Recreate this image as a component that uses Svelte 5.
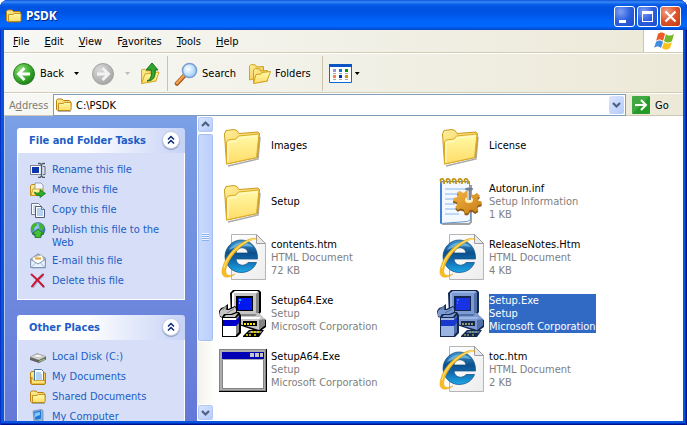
<script>
  const menus = [
    { before: '', key: 'F', after: 'ile' },
    { before: '', key: 'E', after: 'dit' },
    { before: '', key: 'V', after: 'iew' },
    { before: 'F', key: 'a', after: 'vorites' },
    { before: '', key: 'T', after: 'ools' },
    { before: '', key: 'H', after: 'elp' }
  ];

  const panels = [
    {
      title: 'File and Folder Tasks',
      items: [
        { icon: 'rename', label: 'Rename this file' },
        { icon: 'move', label: 'Move this file' },
        { icon: 'copy', label: 'Copy this file' },
        { icon: 'publish', label: 'Publish this file to the Web' },
        { icon: 'mail', label: 'E-mail this file' },
        { icon: 'delete', label: 'Delete this file' }
      ]
    },
    {
      title: 'Other Places',
      items: [
        { icon: 'disk', label: 'Local Disk (C:)' },
        { icon: 'documents', label: 'My Documents' },
        { icon: 'folder', label: 'Shared Documents' },
        { icon: 'computer', label: 'My Computer' }
      ]
    }
  ];

  const files = [
    { icon: 'folder', name: 'Images', info: [] },
    { icon: 'folder', name: 'License', info: [] },
    { icon: 'folder', name: 'Setup', info: [] },
    { icon: 'inf', name: 'Autorun.inf', info: ['Setup Information', '1 KB'] },
    { icon: 'html', name: 'contents.htm', info: ['HTML Document', '72 KB'] },
    { icon: 'html', name: 'ReleaseNotes.Htm', info: ['HTML Document', '4 KB'] },
    { icon: 'setup', name: 'Setup64.Exe', info: ['Setup', 'Microsoft Corporation'] },
    { icon: 'setup', name: 'Setup.Exe', info: ['Setup', 'Microsoft Corporation'] },
    { icon: 'app', name: 'SetupA64.Exe', info: ['Setup', 'Microsoft Corporation'] },
    { icon: 'html', name: 'toc.htm', info: ['HTML Document', '2 KB'] }
  ];

  const normal = { line: '#000', light: '#fff', face: '#c6c6c6', shade: '#848484', blue: '#0000c8', screen: '#0018f0', glow: '#00c8ff', gold: '#f4e400' };
  const tinted = { line: '#14284f', light: '#9cb6e4', face: '#7d9bd2', shade: '#506fa8', blue: '#1838d0', screen: '#1832e4', glow: '#1878f8', gold: '#8c9c68' };

  let selected = $state('Setup.Exe');
  let address = $state('C:\\PSDK');
  let closed = $state({});
</script>

{#snippet smallIcon(name)}
  <svg class="small-icon" viewBox="0 0 16 16" aria-hidden="true">
    {#if name === 'folder'}
      <path d="M2 14.500h12.500l1-9" fill="none" stroke="#6a6a6a" stroke-opacity=".5" />
      <path d="M.5 12.500V3.500l1-1.500h4.500l1.500 1.500h6l1 1v8l-1 1h-12z" fill="url(#foldBack)" stroke="#b9800c" />
      <path d="M2.500 13V6.500h4.500l1.500-1h6.500v7l-1 1H3z" fill="url(#foldFront)" stroke="#b9800c" stroke-width=".8" />
    {:else if name === 'rename'}
      <rect x=".5" y="3.500" width="11" height="9" fill="#fff" stroke="#7b8490" />
      <rect x="2" y="5" width="7" height="6" fill="#0c36b0" />
      <path d="M8 1.500h2l1.500 1 1.500-1h2M11.500 2v12M8 15.500h2l1.500-1.500 1.500 1.500h2" fill="none" stroke="#515966" stroke-width="1.300" />
      <path d="M13 4.500h2v8h-2" fill="#dde2ea" stroke="#626c79" />
    {:else if name === 'move'}
      <path d="M.5 13.500V4l1-1.500H5L6.500 4h6v9.500z" fill="url(#foldBack)" stroke="#c08a18" />
      <path d="M5 1h6l2 2v6H5z" fill="#f5f9ff" stroke="#8193ad" stroke-width=".8" />
      <path d="M1 13.500 3 7h10l-2 6.500z" fill="url(#foldFront)" stroke="#c08a18" stroke-width=".7" />
      <path d="M4.500 10c3 2 4 1 5.500 0V7.500l5.500 4-5.500 4V13c-3 1-5 0-5.500-3z" fill="#2fae2c" stroke="#12701a" stroke-width=".8" />
    {:else if name === 'copy'}
      <path d="M1.500 1.500h7l2 2v9h-9z" fill="#fff" stroke="#6d7b92" />
      <path d="M3 4h4M3 6h3M3 8h3M3 10h3" stroke="#7ba7db" stroke-width=".8" />
      <path d="M5.500 4.500h6l3 3v8h-9z" fill="#fff" stroke="#4b5b76" />
      <path d="M7 7h4M7 9h6M7 11h6M7 13h6" stroke="#5b96dc" stroke-width=".9" />
      <path d="M11.500 4.500v3h3" fill="#d3e2f5" stroke="#4b5b76" stroke-width=".8" />
    {:else if name === 'publish'}
      <circle cx="8" cy="7.500" r="7" fill="url(#globe)" stroke="#37669a" stroke-width=".6" />
      <path d="M2 3c3-3 5-2 5 0S4 4 4 7s-2 2-3 0zM9 1c3 0 5 3 5.500 5L12 9 9.500 6zM10 11l4-2-2 4z" fill="#43b52d" />
      <path d="M8 7l6 5h-3v3.500H5V12H2z" fill="#46bf35" stroke="#146f1b" stroke-width=".8" />
    {:else if name === 'mail'}
      <path d="M2 15h13V7" fill="none" stroke="#74809a" stroke-opacity=".5" />
      <path d="M.7 6 8 .8 15.300 5v9.500H.7z" fill="#a8bfe0" stroke="#7385a4" stroke-width=".8" />
      <path d="M2.500 4.500 12 2l2 6-6 3-5-3z" fill="#fff" stroke="#b9a26d" stroke-width=".5" />
      <path d="M5 5.500h6" stroke="#e6a32d" stroke-width="2" />
      <path d="M.7 6.500 8 11l7.300-4.500v8H.7z" fill="#eaf3ff" stroke="#7289ad" stroke-width=".8" />
      <path d="m1 14.500 5-5m9 5-5-5" stroke="#86a5d0" stroke-width=".8" />
    {:else if name === 'delete'}
      <path d="M2 2.500c4 3 8 7.500 12.500 12M13.500 2.500C9 6 6 10 3 14.500" fill="none" stroke="#777fae" stroke-opacity=".5" stroke-width="2" />
      <path d="M1.500 1.500c4 3 8 7.500 12 12M13 1.500C8 6 5 9 2 13.500" fill="none" stroke="#cb1736" stroke-width="2" stroke-linecap="round" />
    {:else if name === 'disk'}
      <path d="M0 8.500 7 4.500l9 3v3L9 14 0 11z" fill="#626262" />
      <path d="M0 8 7 4.500l9 3L9 11z" fill="#d8d8d6" stroke="#8c8c8c" stroke-width=".5" />
      <ellipse cx="8" cy="7" rx="4" ry="1.500" fill="#f9f9f9" stroke="#999" stroke-width=".5" />
      <path d="M9 12.500 15 10" stroke="#a4d47f" />
    {:else if name === 'documents'}
      <path d="M.5 14V4l1-1.500h4L7 4h8.500v10l-1 1.500h-13z" fill="url(#foldBack)" stroke="#b9800c" />
      <path d="M4.500.5h7l2 2v10h-9z" fill="#fff" stroke="#4778ac" />
      <path d="M6 4h5M6 6h6M6 8h6M6 10h6" stroke="#67a7e8" />
      <path d="M1.500 14.500V8L4 11.500h11V15H2z" fill="url(#foldFront)" stroke="#b9800c" stroke-width=".7" />
    {:else if name === 'computer'}
      <path d="m3 2 8-1.500 2 1v10l-7 2-2-2z" fill="#92b6db" stroke="#6c7f9d" stroke-width=".7" />
      <path d="m4 3 7-1.500v8L5.500 11z" fill="#1c78d8" />
      <path d="m5 4 5-1v3L5 8z" fill="#84c8ff" />
      <path d="m4 13 7-2 3 2-6 2.500z" fill="#d5dae2" stroke="#7d8796" stroke-width=".5" />
    {/if}
  </svg>
{/snippet}

{#snippet setupIcon(c)}
  <path d="M11 4l3-3h26l2 2v20l-2 3 7 5v7l-7 5-20-7V27h-8z" fill={c.line} />
  <path d="M13 4l3-2h22l2 1v19l-3 4H14z" fill={c.face} />
  <path d="M13 5l3-3h23l-2 2H15v20h-2z" fill={c.light} />
  <path d="M37 5l3-2v20l-3 3z" fill={c.shade} />
  <path d="M17 7h17v15H17z" fill={c.line} />
  <path d="M19 9h14v12H19z" fill={c.screen} />
  <path d="M20 12v-2h2v2zM20 15v-2h1v2z" fill={c.glow} />
  <path d="M20 28l4-4h16l6 6v6l-6 5-20-6z" fill={c.face} />
  <path d="M23 25h15l-2 2H21z" fill={c.shade} />
  <path d="M20 28h22l-2 2H20z" fill={c.light} />
  <path d="M40 31l6-1v6l-6 5z" fill={c.shade} />
  <path d="M24 32h14v5H24z" fill={c.line} />
  <path d="M25 35h11" stroke={c.gold} stroke-dasharray="2 1" stroke-width="2" />
  <path d="M3 28l5-5h12l2 3v18l-4 4H3z" fill={c.line} />
  <path d="M4 29h13v18H4z" fill={c.light} />
  <path d="M17 29l3-3v17l-3 3z" fill={c.shade} />
  <path d="M5 28l4-4h10l-3 4z" fill={c.face} />
  <path d="M4 31h13l3-3v6l-3 3H4z" fill={c.blue} />
  <path d="M0 22l2-3 3-1 4-3v5l7-3 2 2v5l-5 2H6l-2 3-3-1z" fill={c.line} />
  <path d="M1 22l2-2 4-3v4h3l6-3 1 2v3l-5 2H5l-2 3-2-1z" fill={c.face} />
  <path d="M4 21l3-4v4M8 24l7-4" stroke={c.shade} fill="none" />
  <path d="M24 47l6-6h15l-5 7H24z" fill={c.line} />
  <path d="M29 44l2-2h12l-1 2z" fill={c.shade} />
  <path d="M32 43h9M27 46h5M35 46h3" stroke={c.gold} stroke-width="1.500" stroke-dasharray="2 1" />
{/snippet}

{#snippet largeIcon(name, active)}
  <svg class="large-icon" viewBox="0 0 48 48" aria-hidden="true">
    {#if name === 'folder'}
      <path d="M9 45l30-7 2-22" fill="none" stroke="#555" stroke-opacity=".5" stroke-width="1.500" />
      <path d="M5.500 13 7 9.500 15 8.500l3 1 2 3 19-1.500 1.500 1.500-2 24L7.500 43z" fill="url(#foldBack)" stroke="#c99a1f" />
      <path d="M7.500 43V21l1.500-2 8-1 2.500-3 20.500-2-2.500 23.500z" fill="url(#foldFront)" stroke="#dcab28" />
      <path d="M9 41V21.500l8.500-1.500 3-3 18-2" fill="none" stroke="#fffbd2" />
    {:else if name === 'html'}
      <path d="M12.500 1.500h25l9 9v36h-34z" fill="url(#paper)" stroke="#b5b5b5" />
      <path d="M37.500 1.500v9h9z" fill="#e9e9e9" stroke="#9d9d9d" />
      <path fill-rule="evenodd" d="M38.500 26H17c.5 7 9 8 12 3.500h8.500C35 36 29 39.500 22 39.500 13 39.500 6 32 6 23.500S13 7 22 7s17 7 16.500 19zM17 20h12c-1-7-11-7-12 0z" fill="url(#ie)" stroke="#0c4a80" stroke-width=".7" />
      <path d="M10 17c4-9 19-10 24-3-8-2-17 0-24 3z" fill="#a7e2ff" fill-opacity=".5" />
      <path d="M38 6C31 2 9 16 4 33c-4 12 4 14 12 8-7 3-10 1-9-5C10 22 28 6 38 6z" fill="#f9bd20" stroke="#d79511" stroke-width=".4" />
      <path d="M36 6C25 7 8 21 5 35" fill="none" stroke="#ffea82" />
    {:else if name === 'inf'}
      <path d="M5 47h27l2-2V8" fill="none" stroke="#444" stroke-opacity=".5" stroke-width="2" />
      <path d="M3.500 4.500h29l1 38-3 2-27 2z" fill="#f4f9ff" stroke="#6495cf" />
      <path d="M3 5h2v41H3z" fill="#3f80d4" />
      <path d="M8 12h20M8 17h16M8 22h11M8 27h10M8 32h12M8 37h14" stroke="#86b7f0" />
      <path d="M5 6c-4-4 1-6 2-2v3M11 6c-4-4 1-6 2-2v3M17 6c-4-4 1-6 2-2v3M23 6c-4-4 1-6 2-2v3M29 6c-4-4 1-6 2-2v3" fill="none" stroke="#bf9515" stroke-width="1.800" />
      <g transform="translate(32 24)">
        <path d="M-3-13h5l1 4 4 2 4-3 4 4-3 4 1 3 4 1v4l-4 1-2 3 2 4-4 3-4-3-3 1-2 4h-4l-1-5-4-2-4 2-3-4 3-4-1-3-5-2 1-4 4-1 2-3-2-4 4-2 4 3 2-1z" transform="translate(-1 1) scale(.8 .7)" fill="#8f5a10" />
        <path d="M-3-13h5l1 4 4 2 4-3 4 4-3 4 1 3 4 1v4l-4 1-2 3 2 4-4 3-4-3-3 1-2 4h-4l-1-5-4-2-4 2-3-4 3-4-1-3-5-2 1-4 4-1 2-3-2-4 4-2 4 3 2-1z" transform="translate(-1 -1) scale(.8 .7)" fill="url(#gear)" />
        <ellipse cx="0" cy="-1" rx="4" ry="3" fill="#fff0bf" />
        <path d="M-2-12h4v11h-4z" fill="#7a8798" />
        <path d="M-2-11h2v10h-2z" fill="#c4ccd4" />
        <ellipse cx="0" cy="-12" rx="4" ry="1.500" fill="#707e8e" />
      </g>
    {:else if name === 'setup'}
      {@render setupIcon(active ? tinted : normal)}
    {:else}
      <path d="M0 4h48v43H0z" fill="#000" />
      <path d="M0 4h47v42H0z" fill="#848484" />
      <path d="M1 5h45v40H1z" fill="#adadad" />
      <path d="M3 7h42v7H3z" fill="#0000b4" />
      <path d="M31 8h4v4h-4zM36 8h4v4h-4zM41 8h3v4h-3z" fill="#c6c6c6" />
      <path d="M3 15h42v29H3z" fill="#848484" />
      <path d="M4 15h40v28H4z" fill="#fff" />
    {/if}
  </svg>
{/snippet}

<!-- gradients shared by the icons -->
<svg class="defs" width="0" height="0" aria-hidden="true">
  <defs>
    <linearGradient id="foldBack" x1="0" y1="0" x2="1" y2="1">
      <stop offset="0" stop-color="#fff09a" /><stop offset="1" stop-color="#eebc3d" />
    </linearGradient>
    <linearGradient id="foldFront" x1="0" y1="0" x2="0" y2="1">
      <stop offset="0" stop-color="#fffaa8" /><stop offset="1" stop-color="#ffdc68" />
    </linearGradient>
    <linearGradient id="paper" x1="0" y1="0" x2="1" y2="1">
      <stop offset="0" stop-color="#fff" /><stop offset="1" stop-color="#ededed" />
    </linearGradient>
    <linearGradient id="ie" x1="0" y1="0" x2="0" y2="1">
      <stop offset="0" stop-color="#3f97d0" /><stop offset=".4" stop-color="#0c4f8c" /><stop offset=".65" stop-color="#126cb0" /><stop offset="1" stop-color="#1ea8e8" />
    </linearGradient>
    <linearGradient id="gear" x1="0" y1="0" x2="1" y2="1">
      <stop offset="0" stop-color="#f6b444" /><stop offset="1" stop-color="#c57d16" />
    </linearGradient>
    <radialGradient id="globe" cx=".35" cy=".3" r=".8">
      <stop offset="0" stop-color="#9ed7ff" /><stop offset="1" stop-color="#1450a8" />
    </radialGradient>
    <radialGradient id="green" cx=".35" cy=".3" r=".8">
      <stop offset="0" stop-color="#8fdd76" /><stop offset=".6" stop-color="#35a82a" /><stop offset="1" stop-color="#157512" />
    </radialGradient>
    <radialGradient id="grey" cx=".35" cy=".3" r=".8">
      <stop offset="0" stop-color="#dadada" /><stop offset="1" stop-color="#a0a0a0" />
    </radialGradient>
    <radialGradient id="lens" cx=".4" cy=".4" r=".7">
      <stop offset="0" stop-color="#fff" /><stop offset="1" stop-color="#8ac5f8" />
    </radialGradient>
  </defs>
</svg>

<div class="window">
  <header class="titlebar">
    {@render smallIcon('folder')}
    <h1>PSDK</h1>
    <div class="window-buttons">
      <button aria-label="Minimize"><svg viewBox="0 0 21 21"><path d="M5 14h7v3H5z" fill="#fff" /></svg></button>
      <button aria-label="Maximize"><svg viewBox="0 0 21 21"><path fill-rule="evenodd" d="M5 5h11v11H5zM6 8v7h9V8z" fill="#fff" /></svg></button>
      <button class="close" aria-label="Close"><svg viewBox="0 0 21 21"><path d="M5.500 5.500l10 10M15.500 5.500l-10 10" stroke="#fff" stroke-width="2.200" /></svg></button>
    </div>
  </header>

  <nav class="menubar">
    {#each menus as menu}
      <button>{menu.before}<u>{menu.key}</u>{menu.after}</button>
    {/each}
    <div class="flag">
      <svg viewBox="0 0 20 20" aria-hidden="true">
        <path d="M4 3c2-2 5-2 7 0l-2 7c-2-2-5-2-7 0z" fill="#ef5a28" />
        <path d="M12 3c2 2 5 2 8 0l-2 7c-3 2-5 2-8 0z" fill="#76b72a" />
        <path d="M2 11c2-2 5-2 7 0l-2 6c-2-2-5-2-7 0z" fill="#3d8de0" />
        <path d="M10 11c2 2 5 2 8 0l-2 6c-3 2-5 2-8 0z" fill="#fbc01b" />
      </svg>
    </div>
  </nav>

  <div class="toolbar">
    <button class="tool">
      <svg width="24" height="24" viewBox="0 0 24 24" aria-hidden="true">
        <circle cx="12" cy="12" r="10.500" fill="url(#green)" stroke="#2c7f24" />
        <path d="M18 12H7M12.500 6 6.500 12l6 6" fill="none" stroke="#fff" stroke-width="2.800" />
      </svg>
      <span>Back</span>
    </button>
    <button class="drop" aria-label="Back history"></button>
    <button class="tool forward" aria-label="Forward" disabled>
      <svg width="24" height="24" viewBox="0 0 24 24" aria-hidden="true">
        <circle cx="12" cy="12" r="10.500" fill="url(#grey)" stroke="#a5a5a5" />
        <path d="M6 12h11M11.500 6l6 6-6 6" fill="none" stroke="#f3f3f3" stroke-width="2.800" />
      </svg>
    </button>
    <button class="drop faded" aria-label="Forward history" disabled></button>
    <button class="tool up" aria-label="Up">
      <svg width="22" height="24" viewBox="0 0 22 24" aria-hidden="true">
        <path d="M2.500 21V8l3-1 2 2 9-1v11z" fill="url(#foldBack)" stroke="#d5a623" />
        <path d="M2.500 21.500 6 12l14-2-3 9z" fill="url(#foldFront)" stroke="#d5a623" />
        <path d="M8 19c4-2 5-5 4-11H7l6-7 6 7h-3c1 7-2 11-8 11z" fill="#33a52c" stroke="#176e18" />
      </svg>
    </button>
    <div class="separator"></div>
    <button class="tool search">
      <svg width="24" height="24" viewBox="0 0 24 24" aria-hidden="true">
        <path d="M10 14 3 21.500" stroke="#a65c20" stroke-width="4.500" stroke-linecap="round" />
        <path d="M9.500 14 3 21" stroke="#f4a052" stroke-width="2.500" stroke-linecap="round" />
        <circle cx="15.500" cy="8.500" r="7" fill="url(#lens)" stroke="#7b9fd3" stroke-width="1.600" />
      </svg>
      <span>Search</span>
    </button>
    <button class="tool folders">
      <svg width="24" height="24" viewBox="0 0 24 24" aria-hidden="true">
        <path d="M2.500 18V4l2-1.500 4 .5 1 2 7-.5V14z" fill="url(#foldBack)" stroke="#d2a11d" />
        <path d="M6.500 21V8l2-1.500 4 .5 1 2 7-.5V19z" fill="url(#foldBack)" stroke="#d2a11d" />
        <path d="M6.500 21.500 9 12.500l5-.5 1-1.500 8.500-1L20 19z" fill="url(#foldFront)" stroke="#d2a11d" />
      </svg>
      <span>Folders</span>
    </button>
    <div class="separator"></div>
    <button class="tool views" aria-label="Views">
      <svg width="24" height="20" viewBox="0 0 24 20" aria-hidden="true">
        <path d="M.5.500h22v18H.5z" fill="#fff" stroke="#0c67d8" />
        <path d="M0 0h23v3H0z" fill="#0756c4" />
        <path d="M4 5h3v3H4z" fill="#9999cc" /><path d="M10 5h3v3h-3z" fill="#0b7be0" /><path d="M16 5h3v3h-3z" fill="#009a00" />
        <path d="M4 11h3v3H4z" fill="#ff7f50" /><path d="M10 11h3v3h-3z" fill="#003399" /><path d="M16 11h3v3h-3z" fill="#cc9900" />
        <path d="M4 9.500h3M10 9.500h3M16 9.500h3M4 15.500h3M10 15.500h3M16 15.500h3" stroke="#aaa" />
      </svg>
    </button>
    <button class="drop" aria-label="Views menu"></button>
  </div>

  <form class="addressbar" onsubmit={(e) => e.preventDefault()}>
    <label for="address">A<u>d</u>dress</label>
    <div class="address-box">
      {@render smallIcon('folder')}
      <input id="address" type="text" bind:value={address} />
      <button type="button" aria-label="Address history">
        <svg viewBox="0 0 15 18" aria-hidden="true"><path d="m4 7 3.500 3.500L11 7" fill="none" stroke="#4d6185" stroke-width="2.200" /></svg>
      </button>
    </div>
    <button class="go">
      <svg width="18" height="18" viewBox="0 0 18 18" aria-hidden="true">
        <rect width="18" height="18" rx="1" fill="#269a29" />
        <path d="M0 0h18L0 18z" fill="#6fbf68" fill-opacity=".4" />
        <path d="M3 9h10M9 4l5 5-5 5" fill="none" stroke="#fff" stroke-width="2" />
      </svg>
      <span>Go</span>
    </button>
  </form>

  <div class="content">
    <aside>
      {#each panels as panel}
        <section>
          <div class="panel-header">
            <h2>{panel.title}</h2>
            <button aria-label="Toggle {panel.title}" onclick={() => (closed[panel.title] = !closed[panel.title])}>
              <svg viewBox="0 0 18 18" aria-hidden="true"><path d="m6 8.500 3-3 3 3M6 12.500l3-3 3 3" fill="none" stroke="#0a2a78" stroke-width="1.500" /></svg>
            </button>
          </div>
          {#if !closed[panel.title]}
            <ul>
              {#each panel.items as item}
                <li><a href="#{item.icon}">{@render smallIcon(item.icon)}<span>{item.label}</span></a></li>
              {/each}
            </ul>
          {/if}
        </section>
      {/each}
    </aside>

    <div class="scrollbar">
      <button aria-label="Scroll up"><svg viewBox="0 0 15 15"><path d="m4 9 3.500-3.500L11 9" fill="none" stroke="#4d6185" stroke-width="2.200" /></svg></button>
      <div class="track">
        <div class="thumb"><span></span></div>
      </div>
      <button aria-label="Scroll down"><svg viewBox="0 0 15 15"><path d="m4 6 3.500 3.500L11 6" fill="none" stroke="#4d6185" stroke-width="2.200" /></svg></button>
    </div>

    <main>
      {#each files as file}
        <button class="file" class:selected={file.name === selected} onclick={() => (selected = file.name)}>
          {@render largeIcon(file.icon, file.name === selected)}
          <span class="caption">
            <span>{file.name}</span>
            {#each file.info as line}
              <span class="info">{line}</span>
            {/each}
          </span>
        </button>
      {/each}
    </main>
  </div>
</div>

<style>
  :global(body) {
    margin: 0;
    background: #fff;
  }
  * {
    box-sizing: border-box;
  }
  button, input {
    font: inherit;
    color: inherit;
    border: 0;
    padding: 0;
    margin: 0;
    background: none;
  }
  svg {
    display: block;
    flex: none;
  }
  .defs {
    position: absolute;
  }
  .small-icon {
    width: 16px;
    height: 16px;
  }
  .large-icon {
    width: 48px;
    height: 48px;
  }
  .window {
    display: flex;
    flex-direction: column;
    height: 100vh;
    padding: 0 4px 4px;
    overflow: hidden;
    border-radius: 8px 8px 0 0;
    background: #0855dd;
    box-shadow: inset 1px 0 #0831c9, inset -1px 0 #00138c, inset -2px 0 #0030c0, inset 0 -1px #00138c, inset 0 -2px #0030c0;
    font: 11px/13px "DejaVu Sans Condensed", Tahoma, "DejaVu Sans", sans-serif;
    color: #000;
  }

  .titlebar {
    display: flex;
    align-items: center;
    flex: none;
    height: 30px;
    margin: 0 -4px;
    padding: 2px 6px 0;
    gap: 4px;
    background: linear-gradient(#0a50d8 0, #3a8cf8 2px, #0d62ea 4px, #0054e3 7px, #0054e3 13px, #0062f8 20px, #0068ff 26px, #0050d8 29px, #0043c0 30px);
  }
  .titlebar h1 {
    flex: 1;
    margin: 0;
    font: bold 12px/16px "Noto Sans", "Trebuchet MS", sans-serif;
    color: #fff;
    text-shadow: 1px 1px #0a2a80;
  }
  .window-buttons {
    display: flex;
    gap: 2px;
  }
  .window-buttons button {
    width: 21px;
    height: 21px;
    border: 1px solid #fff;
    border-radius: 3px;
    background: radial-gradient(circle at 30% 25%, #7f9ff0, #2b5ee0 50%, #1c4cc8);
  }
  .window-buttons svg {
    width: 21px;
    height: 21px;
    margin: -1px;
  }
  .window-buttons .close {
    background: radial-gradient(circle at 30% 25%, #f0a088, #e0532c 50%, #c03a10);
  }

  .menubar, .toolbar, .addressbar {
    display: flex;
    align-items: center;
    flex: none;
    background: linear-gradient(90deg, #f7f8f5, #ece9d8);
  }
  .menubar {
    height: 24px;
    padding-left: 1px;
    border-bottom: 1px solid #fff;
    box-shadow: inset 0 -1px #d3ccb4;
  }
  .menubar button {
    padding: 0 7px 0 8px;
  }
  .flag {
    display: grid;
    place-items: center;
    align-self: stretch;
    width: 40px;
    margin: 0 0 1px auto;
    border-left: 1px solid #cdc6ae;
    background: #fff;
  }
  .flag svg {
    width: 20px;
    height: 20px;
  }

  .toolbar {
    height: 40px;
    padding-left: 8px;
    border-bottom: 1px solid #fff;
    box-shadow: inset 0 -1px #d3ccb4;
  }
  .tool {
    display: flex;
    align-items: center;
    gap: 4px;
  }
  .drop {
    width: 5px;
    height: 3px;
    margin-left: 10px;
    background: #000;
    clip-path: polygon(0 0, 100% 0, 50% 100%);
  }
  .faded {
    background: #bbb;
  }
  .forward {
    margin-left: 12px;
  }
  .up {
    margin-left: 9px;
  }
  .separator {
    width: 1px;
    height: 35px;
    margin: 0 6px;
    background: #c9c3ac;
  }
  .folders {
    margin-left: 11px;
  }
  .folders + .separator {
    margin-left: 11px;
  }
  .views + .drop {
    margin-left: 2px;
  }

  .addressbar {
    height: 22px;
    padding-left: 5px;
    box-shadow: inset 0 -1px #cdc6b0;
  }
  .addressbar label {
    width: 44px;
    color: #7f7c73;
  }
  .address-box {
    display: flex;
    align-items: center;
    flex: 1;
    height: 22px;
    padding: 0 1px 0 2px;
    border: 1px solid #7f9db9;
    background: #fff;
  }
  .address-box input {
    flex: 1;
    min-width: 0;
    padding-left: 4px;
    outline: 0;
  }
  .address-box button {
    width: 15px;
    height: 18px;
    border-radius: 2px;
    background: linear-gradient(135deg, #dbe6fe, #b3cafa);
  }
  .go {
    display: flex;
    align-items: center;
    gap: 5px;
    width: 57px;
    padding-left: 6px;
  }

  .content {
    display: flex;
    flex: 1;
    min-height: 0;
    background: #fff;
  }
  aside {
    flex: none;
    width: 193px;
    padding: 12px;
    overflow: hidden;
    border-left: 1px solid #b4c8f0;
    background: linear-gradient(#7ba0e6, #6478d8);
  }
  section {
    margin-bottom: 15px;
  }
  .panel-header {
    display: flex;
    align-items: center;
    justify-content: space-between;
    height: 25px;
    padding: 0 5px 2px 12px;
    border-radius: 3px 3px 0 0;
    background: linear-gradient(90deg, #fff 40%, #c6d3f7);
  }
  .panel-header h2 {
    margin: 2px 0 0;
    font-size: 11px;
    color: #215dc6;
    white-space: nowrap;
  }
  .panel-header button {
    width: 18px;
    height: 18px;
    border: 1px solid #c4cce4;
    border-radius: 50%;
    background: #fff;
    box-shadow: 0 1px 1px #8a96b8;
  }
  .panel-header button svg {
    width: 18px;
    height: 18px;
    margin: -1px;
  }
  ul {
    display: grid;
    gap: 4px;
    margin: 0;
    padding: 9px 11px 10px 12px;
    border: 1px solid #fff;
    border-top: 0;
    list-style: none;
    background: #d6dff7;
  }
  li a {
    display: flex;
    gap: 6px;
    color: #215dc6;
    text-decoration: none;
  }
  li span {
    padding-top: 1px;
  }

  .scrollbar {
    display: flex;
    flex-direction: column;
    flex: none;
    width: 17px;
    background: linear-gradient(90deg, #f3f1ec, #fefefb);
  }
  .scrollbar button {
    flex: none;
    width: 17px;
    height: 17px;
    border: 1px solid #fff;
    border-radius: 3px;
    background: linear-gradient(135deg, #dbe6fe, #b3cafa);
    box-shadow: inset 0 0 0 1px #b5c8f2;
  }
  .scrollbar button svg {
    width: 15px;
    height: 15px;
  }
  .track {
    flex: 1;
  }
  .thumb {
    display: grid;
    place-items: center;
    height: 77%;
    border: 1px solid #fff;
    border-radius: 3px;
    background: linear-gradient(90deg, #cbdafd, #bacffb);
    box-shadow: inset 0 0 0 1px #a6bff0;
  }
  .thumb span {
    width: 7px;
    height: 8px;
    background: repeating-linear-gradient(#eef4fe 0 1px, #8cb0f8 1px 2px);
  }

  main {
    display: grid;
    grid-template-columns: repeat(auto-fill, 218px);
    align-content: start;
    flex: 1;
    padding: 1px 0 0 5px;
    overflow: hidden;
  }
  .file {
    display: flex;
    align-items: center;
    gap: 4px;
    height: 56px;
    text-align: left;
  }
  .caption {
    display: grid;
    white-space: nowrap;
  }
  .info {
    color: #808080;
  }
  .selected .caption, .selected .info {
    background: #316ac5;
    color: #fff;
  }
</style>
